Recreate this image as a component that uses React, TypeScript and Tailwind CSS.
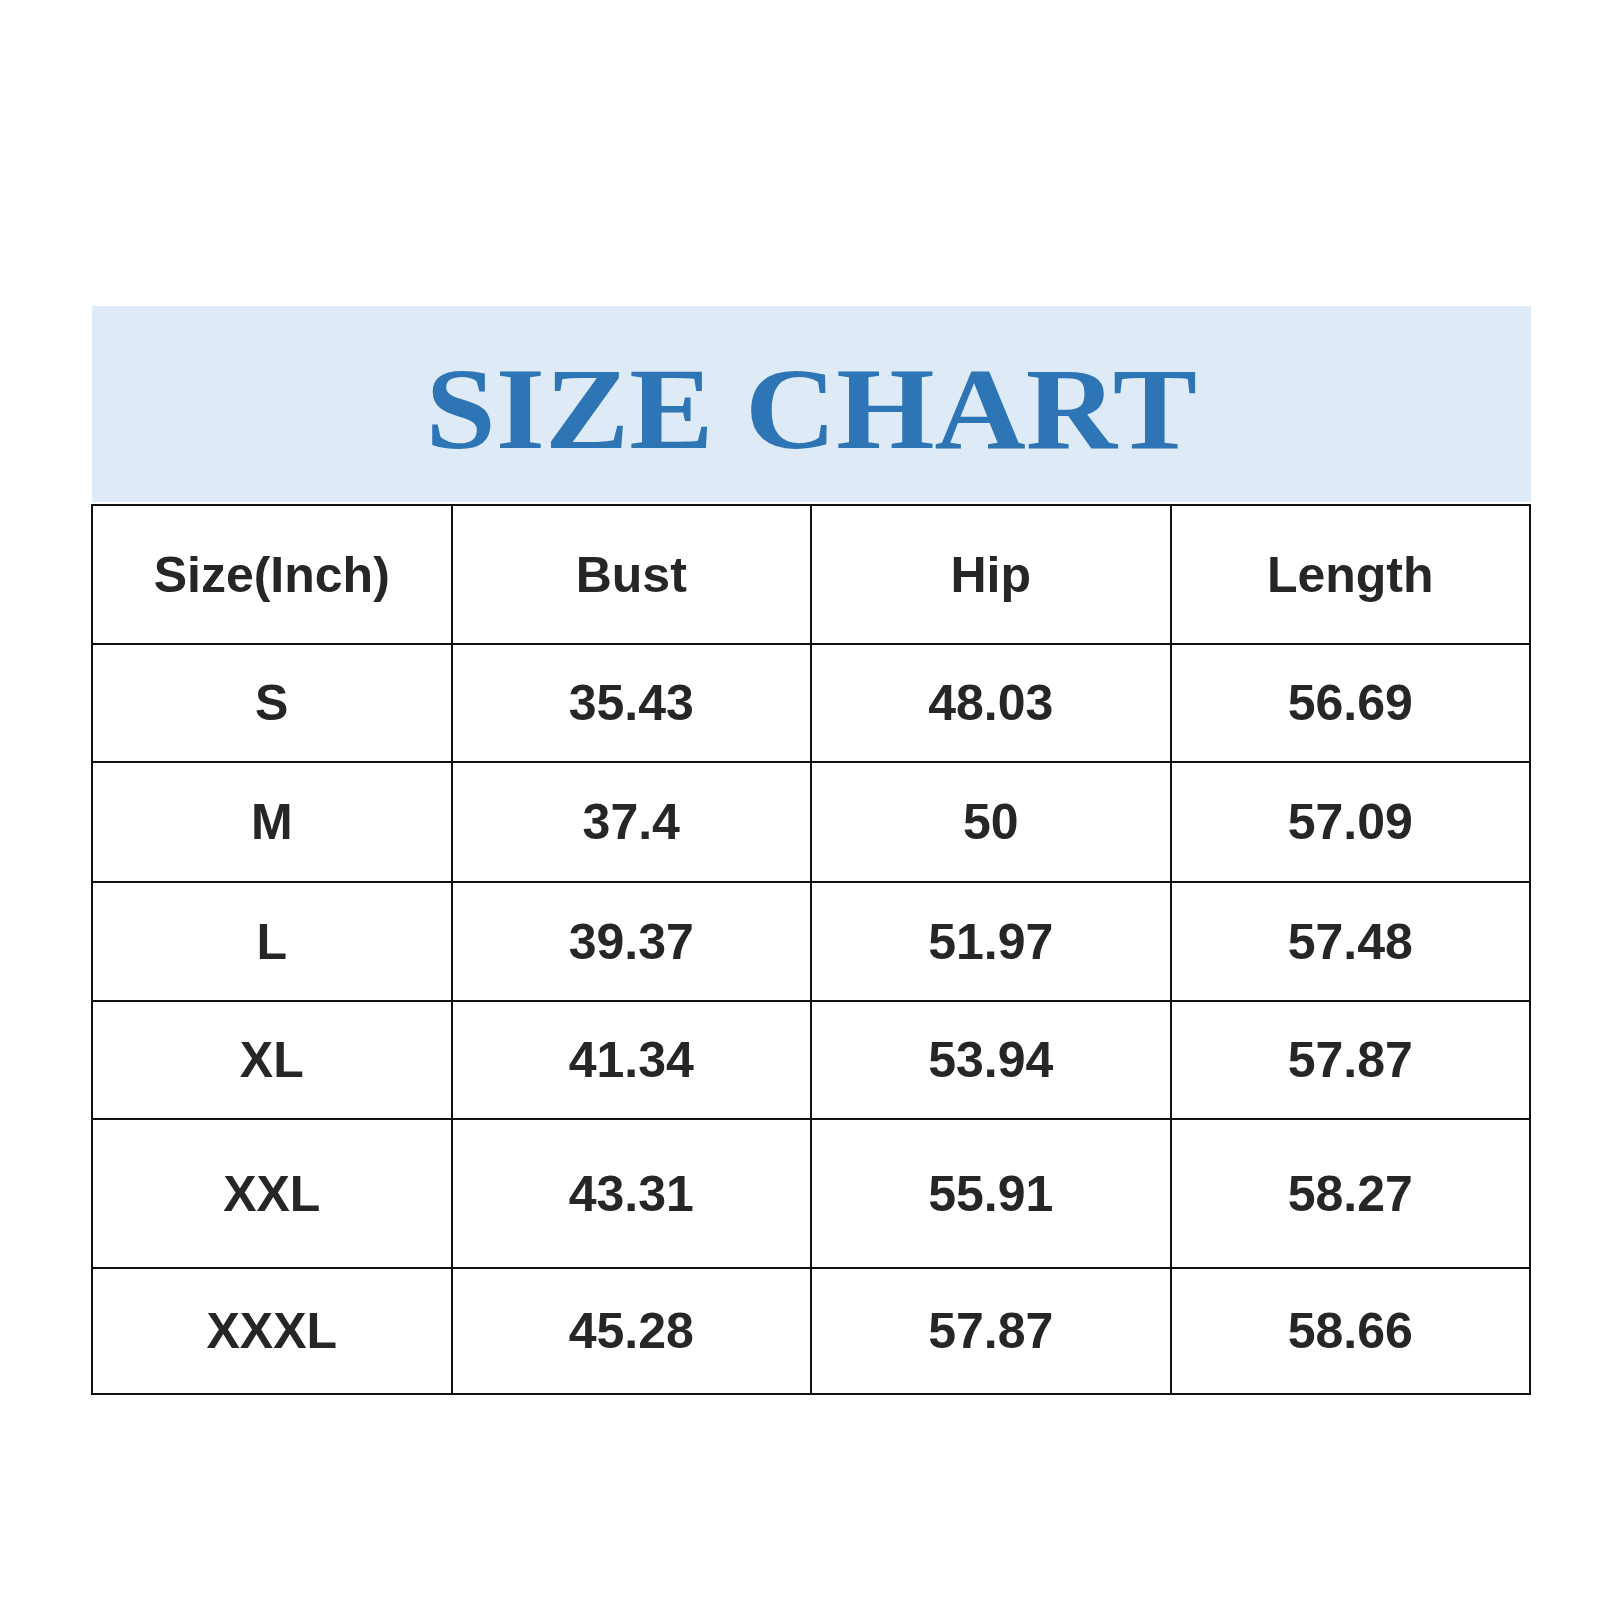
const rows: { size: string; bust: string; hip: string; length: string; h: string }[] = [
  { size: "S", bust: "35.43", hip: "48.03", length: "56.69", h: "h-[118px]" },
  { size: "M", bust: "37.4", hip: "50", length: "57.09", h: "h-[120px]" },
  { size: "L", bust: "39.37", hip: "51.97", length: "57.48", h: "h-[119px]" },
  { size: "XL", bust: "41.34", hip: "53.94", length: "57.87", h: "h-[118px]" },
  { size: "XXL", bust: "43.31", hip: "55.91", length: "58.27", h: "h-[149px]" },
  { size: "XXXL", bust: "45.28", hip: "57.87", length: "58.66", h: "h-[126px]" },
];

function Cell({ children, h }: { children: React.ReactNode; h: string }) {
  return (
    <div
      className={`${h} flex items-center justify-center border-r-2 border-b-2 border-[#111]`}
    >
      {children}
    </div>
  );
}

export default function App() {
  return (
    <div className="min-h-[1600px] w-[1600px] bg-white pt-[306px] pl-[91px]">
      <div className="w-[1440px]">
        <div className="ml-[1px] flex h-[196px] w-[1439px] items-center justify-center bg-[#deebf7]">
          <h1 className="mt-[8px] scale-x-[1.08] font-['Liberation_Serif',serif] text-[117px] leading-none font-bold text-[#2e75b6]">
            SIZE CHART
          </h1>
        </div>
        <div className="mt-[2px] grid grid-cols-4 border-t-2 border-l-2 border-[#111] font-['Liberation_Sans',Arial,sans-serif] text-[50px] leading-none font-bold text-[#262626]">
          <Cell h="h-[139px]">Size(Inch)</Cell>
          <Cell h="h-[139px]">Bust</Cell>
          <Cell h="h-[139px]">Hip</Cell>
          <Cell h="h-[139px]">Length</Cell>
          {rows.map((r) => (
            <div key={r.size} className="contents">
              <Cell h={r.h}>{r.size}</Cell>
              <Cell h={r.h}>{r.bust}</Cell>
              <Cell h={r.h}>{r.hip}</Cell>
              <Cell h={r.h}>{r.length}</Cell>
            </div>
          ))}
        </div>
      </div>
    </div>
  );
}
